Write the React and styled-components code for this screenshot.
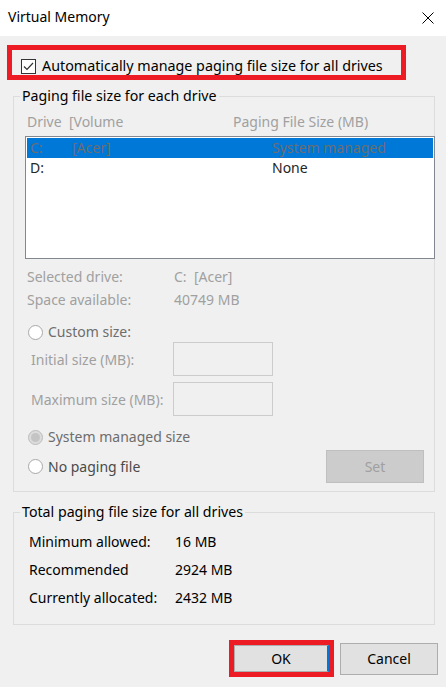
import React from "react";
import styled, { createGlobalStyle } from "styled-components";

const Global = createGlobalStyle`
  html, body { margin: 0; padding: 0; background: #f0f0f0; }
  body { font-family: "Noto Sans", "Open Sans", sans-serif; font-size: 14px; color: #000; }
  * { box-sizing: border-box; }
`;

const Dialog = styled.div`
  width: 446px;
  height: 687px;
  background: #f0f0f0;
  display: flex;
  flex-direction: column;
  overflow: hidden;
`;

const TitleBar = styled.div`
  height: 36px;
  background: #fff;
  display: flex;
  align-items: center;
  justify-content: space-between;
  padding: 0 12px 0 8px;
  flex-shrink: 0;
`;

const Title = styled.div`
  font-size: 14px;
  line-height: 20px;
  margin-top: -3px;
`;

const CloseBtn = styled.svg`
  width: 12px;
  height: 12px;
`;

const Highlight = styled.div`
  border: 5px solid #ed1c24;
  margin: ${(p) => p.$margin};
  width: ${(p) => p.$w}px;
  height: ${(p) => p.$h}px;
  display: flex;
  align-items: ${(p) => p.$align || "center"};
`;

const CheckRow = styled.label`
  display: flex;
  align-items: center;
  padding-left: 9px;
  margin-top: 6px;
  font-size: 14.3px;
  line-height: 20px;
`;

const CheckBox = styled.span`
  width: 15px;
  height: 15px;
  border: 1px solid #333;
  background: #fff;
  margin-right: 6px;
  display: flex;
  align-items: center;
  justify-content: center;
`;

const Group = styled.fieldset`
  margin: ${(p) => p.$margin};
  width: 422px;
  border: 1px solid #dcdcdc;
  padding: 0 0 ${(p) => p.$pb}px 0;
  min-width: 0;
`;

const Legend = styled.legend`
  margin-left: 6px;
  padding: 0 2px;
  font-size: 14.2px;
  line-height: 20px;
  color: #000;
`;

const HeaderRow = styled.div`
  display: grid;
  grid-template-columns: 206px auto;
  padding-left: 13px;
  margin-top: 6px;
  line-height: 20px;
  color: #a0a0a0;
`;

const ListBox = styled.div`
  margin: 4px 0 0 11px;
  width: 410px;
  height: 123px;
  border: 1px solid #828790;
  background: #fff;
  padding: 1px;
`;

const ListRow = styled.div`
  display: grid;
  grid-template-columns: 42px 200px auto;
  height: 20px;
  line-height: 20px;
  padding-left: 3px;
  background: ${(p) => (p.$selected ? "#0078d7" : "transparent")};
  color: ${(p) => (p.$selected ? "#6d6d6d" : "#262626")};
`;

const InfoList = styled.div`
  margin-top: ${(p) => p.$mt}px;
  display: flex;
  flex-direction: column;
  gap: ${(p) => p.$gap}px;
`;

const InfoRow = styled.div`
  display: grid;
  grid-template-columns: ${(p) => p.$col}px auto;
  padding-left: ${(p) => p.$pl}px;
  line-height: ${(p) => p.$lh || 20}px;
  color: ${(p) => p.$color};
`;

const RadioRow = styled.div`
  display: flex;
  align-items: center;
  padding-left: 14px;
  margin-top: ${(p) => p.$mt}px;
  height: 20px;
  line-height: 20px;
  color: ${(p) => p.$color || "#6d6d6d"};
`;

const Radio = styled.span`
  width: 15px;
  height: 15px;
  border-radius: 50%;
  border: 1px solid ${(p) => (p.$checked ? "#bcbcbc" : "#a8a8a8")};
  background: ${(p) => (p.$checked ? "#dcdcdc" : "#fff")};
  margin-right: 5px;
  display: flex;
  align-items: center;
  justify-content: center;
  &::after {
    content: "";
    display: ${(p) => (p.$checked ? "block" : "none")};
    width: 9px;
    height: 9px;
    border-radius: 50%;
    background: #c4c4c4;
  }
`;

const InputRow = styled.div`
  display: grid;
  grid-template-columns: 142px 100px;
  align-items: center;
  padding-left: 17px;
  margin-top: ${(p) => p.$mt}px;
  color: #a0a0a0;
`;

const TextInput = styled.div`
  width: 100px;
  height: 34px;
  border: 1px solid #cccccc;
  background: #f0f0f0;
`;

const SetRow = styled.div`
  display: flex;
  align-items: center;
  justify-content: space-between;
  margin-top: 3px;
  padding-right: 10px;
`;

const Button = styled.button`
  width: ${(p) => p.$w}px;
  height: ${(p) => p.$h}px;
  font-family: inherit;
  font-size: 14px;
  background: ${(p) => (p.$disabled ? "#cccccc" : "#e1e1e1")};
  border: 1px solid ${(p) => (p.$disabled ? "#bfbfbf" : "#adadad")};
  border-right: ${(p) => (p.$focus ? "2px solid #0078d7" : undefined)};
  color: ${(p) => (p.$disabled ? "#a0a0a0" : "#000")};
  padding: 0;
  display: flex;
  align-items: center;
  justify-content: center;
`;

const Footer = styled.div`
  display: flex;
  justify-content: flex-end;
  align-items: center;
  gap: 6px;
  margin-top: 15px;
  padding-right: 8px;
`;

export default function App() {
  return (
    <>
      <Global />
      <Dialog>
        <TitleBar>
          <Title>Virtual Memory</Title>
          <CloseBtn viewBox="0 0 12 12">
            <path d="M0.5 0.5 L11.5 11.5 M11.5 0.5 L0.5 11.5" stroke="#000" strokeWidth="1" fill="none" />
          </CloseBtn>
        </TitleBar>

        <Highlight $margin="9px 0 0 7px" $w={399} $h={35} $align="flex-start">
          <CheckRow>
            <CheckBox>
              <svg width="11" height="9" viewBox="0 0 11 9">
                <path d="M1 4.5 L4 7.5 L10 1" stroke="#333" strokeWidth="1.2" fill="none" />
              </svg>
            </CheckBox>
            Automatically manage paging file size for all drives
          </CheckRow>
        </Highlight>

        <Group $margin="6px 0 0 13px" $pb={8}>
          <Legend>Paging file size for each drive</Legend>
          <HeaderRow>
            <span>Drive&nbsp;&nbsp;[Volume</span>
            <span>Paging File Size (MB)</span>
          </HeaderRow>
          <ListBox>
            <ListRow $selected>
              <span>C:</span>
              <span>[Acer]</span>
              <span>System managed</span>
            </ListRow>
            <ListRow>
              <span>D:</span>
              <span></span>
              <span>None</span>
            </ListRow>
          </ListBox>
          <InfoList $mt={8} $gap={3}>
            <InfoRow $col={147} $pl={13} $color="#a0a0a0">
              <span>Selected drive:</span>
              <span>C:&nbsp;&nbsp;[Acer]</span>
            </InfoRow>
            <InfoRow $col={147} $pl={13} $color="#a0a0a0">
              <span>Space available:</span>
              <span>40749 MB</span>
            </InfoRow>
          </InfoList>

          <RadioRow $mt={12}>
            <Radio />
            Custom size:
          </RadioRow>
          <InputRow $mt={0}>
            <span>Initial size (MB):</span>
            <TextInput />
          </InputRow>
          <InputRow $mt={6}>
            <span>Maximum size (MB):</span>
            <TextInput />
          </InputRow>
          <RadioRow $mt={11}>
            <Radio $checked />
            System managed size
          </RadioRow>
          <SetRow>
            <RadioRow $mt={0} $color="#4a4a4a">
              <Radio />
              No paging file
            </RadioRow>
            <Button $w={98} $h={33} $disabled disabled>
              Set
            </Button>
          </SetRow>
        </Group>

        <Group $margin="10px 0 0 13px" $pb={12}>
          <Legend>Total paging file size for all drives</Legend>
          <InfoList $mt={6} $gap={0}>
            <InfoRow $col={146} $pl={15} $lh={28} $color="#000">
              <span>Minimum allowed:</span>
              <span>16 MB</span>
            </InfoRow>
            <InfoRow $col={146} $pl={15} $lh={28} $color="#000">
              <span>Recommended</span>
              <span>2924 MB</span>
            </InfoRow>
            <InfoRow $col={146} $pl={15} $lh={28} $color="#000">
              <span>Currently allocated:</span>
              <span>2432 MB</span>
            </InfoRow>
          </InfoList>
        </Group>

        <Footer>
          <Highlight $margin="0" $w={105} $h={37}>
            <Button $w={95} $h={27} $focus>
              OK
            </Button>
          </Highlight>
          <Button $w={98} $h={32}>
            Cancel
          </Button>
        </Footer>
      </Dialog>
    </>
  );
}
